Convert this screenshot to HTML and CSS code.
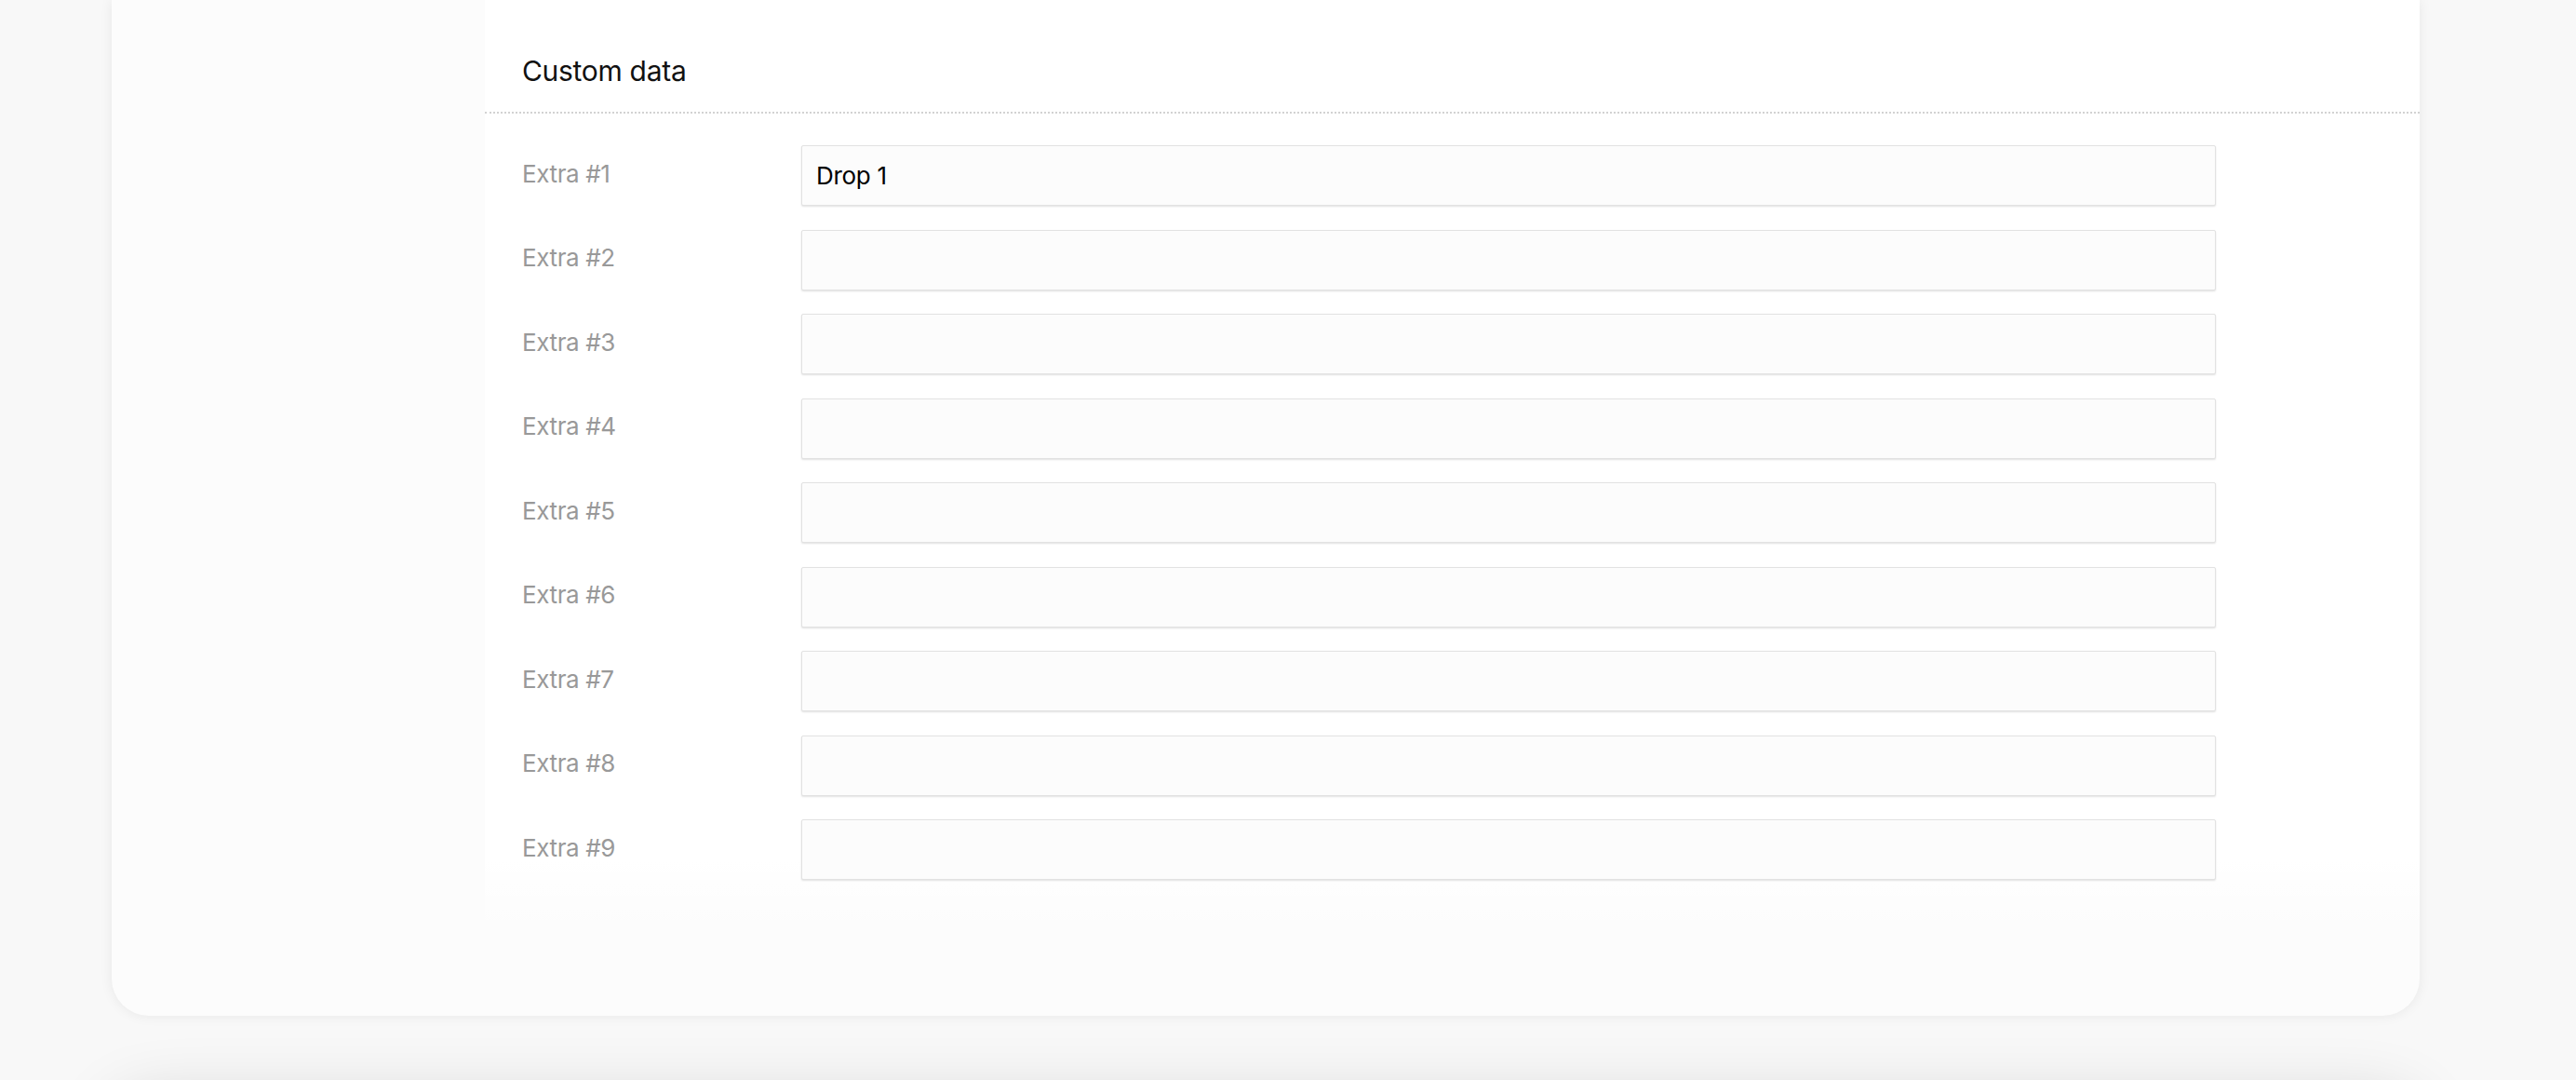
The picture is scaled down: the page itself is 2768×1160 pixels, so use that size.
FILE: index.html
```html
<!DOCTYPE html>
<html lang="en">
<head>
    <meta charset="UTF-8">
    <meta name="viewport" content="width=device-width, initial-scale=1.0">
    <title>Custom data</title>
    <link rel="stylesheet" href="styles.css">
</head>
<body>
    <div class="card">
        <aside class="side"></aside>
        <section class="panel">
            <header class="panel-head">
                <h2>Custom data</h2>
            </header>
            <form class="fields">
                <label for="extra1">Extra #1</label>
                <input type="text" id="extra1" name="extra1" value="Drop 1">

                <label for="extra2">Extra #2</label>
                <input type="text" id="extra2" name="extra2">

                <label for="extra3">Extra #3</label>
                <input type="text" id="extra3" name="extra3">

                <label for="extra4">Extra #4</label>
                <input type="text" id="extra4" name="extra4">

                <label for="extra5">Extra #5</label>
                <input type="text" id="extra5" name="extra5">

                <label for="extra6">Extra #6</label>
                <input type="text" id="extra6" name="extra6">

                <label for="extra7">Extra #7</label>
                <input type="text" id="extra7" name="extra7">

                <label for="extra8">Extra #8</label>
                <input type="text" id="extra8" name="extra8">

                <label for="extra9">Extra #9</label>
                <input type="text" id="extra9" name="extra9">
            </form>
        </section>
    </div>
    <div class="card next"></div>
</body>
</html>
```

FILE: styles.css
```css
body {
    font-family: Inter, "Noto Sans", sans-serif;
    background-color: #f8f8f8;
    margin: 0;
    padding: 0;
    overflow: hidden;
}
.card {
    display: grid;
    grid-template-columns: 401px 1fr;
    width: 2480px;
    margin-left: 120px;
    background: #fcfcfc;
    border-radius: 0 0 40px 40px;
    box-shadow: 0 0 14px rgba(0, 0, 0, 0.07);
    overflow: hidden;
}
.card.next {
    height: 400px;
    margin-top: 90px;
    border-radius: 40px;
    box-shadow: 0 0 70px rgba(0, 0, 0, 0.16);
}
.panel {
    padding-bottom: 146px;
    background: linear-gradient(to bottom, #fff calc(100% - 168px), rgba(255, 255, 255, 0) calc(100% - 90px));
}
.panel-head {
    padding: 58px 40px 26px;
    border-bottom: 2px dotted #d2d2d2;
}
h2 {
    margin: 0;
    font-size: 30px;
    line-height: 36px;
    font-weight: 400;
    color: #111;
    letter-spacing: -0.3px;
}
.fields {
    display: grid;
    grid-template-columns: 300px 1520px;
    row-gap: 25.5px;
    align-items: center;
    padding: 34px 40px 0;
}
label {
    padding-bottom: 5px;
    font-size: 26px;
    color: #999;
    letter-spacing: -0.4px;
}
input[type="text"] {
    height: 65px;
    padding: 0 15px;
    border: 1px solid #e2e2e2;
    border-radius: 2px;
    background: #fcfcfc;
    box-shadow: 0 1px 2px rgba(0, 0, 0, 0.12);
    box-sizing: border-box;
    font-family: inherit;
    font-size: 26px;
    color: #000;
    letter-spacing: -0.3px;
    outline: none;
}
```
